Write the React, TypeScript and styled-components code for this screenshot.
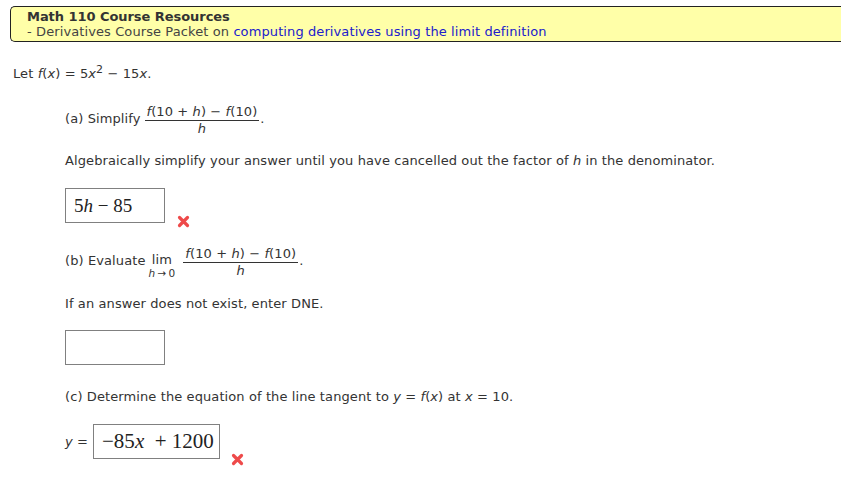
import React from "react";
import styled, { createGlobalStyle } from "styled-components";

const Global = createGlobalStyle`
  html, body { margin: 0; padding: 0; background: #fff; }
  body {
    font-family: "DejaVu Sans", Verdana, sans-serif;
    font-size: 13px;
    letter-spacing: 0.1px;
    color: #333;
  }
`;

const Page = styled.div`
  width: 841px;
  height: 482px;
  overflow: hidden;
  padding-top: 6px;
  box-sizing: border-box;
`;

const Header = styled.div`
  margin-left: 10px;
  border: 1px solid #222;
  border-right: none;
  border-radius: 5px 0 0 5px;
  background: #ffffa8;
  padding: 2px 16px 2px 16px;
  line-height: 15px;
`;

const HeaderTitle = styled.div`
  font-weight: bold;
  letter-spacing: -0.05px;
  color: #333;
`;

const HeaderLine = styled.div`
  color: #444;
`;

const Link = styled.a`
  color: #2020cc;
  text-decoration: none;
`;

const Intro = styled.div`
  margin: 24px 0 0 13px;
  line-height: 16px;
`;

const Part = styled.div<{ $top: number }>`
  margin: ${(p) => p.$top}px 0 0 65px;
  line-height: 16px;
`;

const I = styled.i`
  font-style: italic;
`;

const Sup = styled.sup`
  font-size: 11px;
  line-height: 0;
  vertical-align: 5px;
`;

const Frac = styled.span`
  display: inline-flex;
  flex-direction: column;
  align-items: stretch;
  vertical-align: middle;
  text-align: center;
  line-height: 15px;
  margin: 0 1px 0 4px;
  position: relative;
  top: 1px;
`;

const Num = styled.span`
  border-bottom: 1px solid #333;
  padding: 0 2px 1px;
`;

const Den = styled.span`
  padding-top: 0;
`;

const Lim = styled.span`
  display: inline-flex;
  flex-direction: column;
  align-items: center;
  vertical-align: middle;
  margin: 0 4px 0 3px;
  position: relative;
  top: 5px;
`;

const LimWord = styled.span`
  line-height: 14px;
`;

const LimSub = styled.span`
  font-size: 10.5px;
  line-height: 13px;
`;

const AnswerRow = styled.div<{ $top: number }>`
  display: flex;
  align-items: flex-end;
  margin: ${(p) => p.$top}px 0 0 65px;
`;

const Box = styled.div<{ $w: number; $size: number }>`
  width: ${(p) => p.$w}px;
  height: 35px;
  box-sizing: border-box;
  border: 1px solid #808080;
  display: flex;
  align-items: center;
  padding-left: 8px;
  font-family: "Liberation Serif", "DejaVu Serif", serif;
  font-size: ${(p) => p.$size}px;
  letter-spacing: 0;
  color: #222;
  white-space: pre;
`;

const MathI = styled.i`
  font-style: italic;
`;

const Label = styled.span`
  align-self: center;
  margin-right: 5px;
`;

const Cross = styled.svg<{ $gap: number; $drop: number }>`
  margin-left: ${(p) => p.$gap}px;
  margin-bottom: -${(p) => p.$drop}px;
  flex: none;
`;

function XMark({ gap, drop }: { gap: number; drop: number }) {
  return (
    <Cross $gap={gap} $drop={drop} width="13" height="13" viewBox="0 0 13 13">
      <path
        d="M2.5 2.5 L10.5 10.5 M10.5 2.5 L2.5 10.5"
        stroke="#ee4a4a"
        strokeWidth="3.2"
        strokeLinecap="round"
      />
    </Cross>
  );
}

function Fraction() {
  return (
    <Frac>
      <Num>
        <I>f</I>(10 + <I>h</I>) − <I>f</I>(10)
      </Num>
      <Den>
        <I>h</I>
      </Den>
    </Frac>
  );
}

export default function App() {
  return (
    <Page>
      <Global />
      <Header>
        <HeaderTitle>Math 110 Course Resources</HeaderTitle>
        <HeaderLine>
          - Derivatives Course Packet on{" "}
          <Link href="#">computing derivatives using the limit definition</Link>
        </HeaderLine>
      </Header>

      <Intro>
        Let <I>f</I>(<I>x</I>) = 5<I>x</I>
        <Sup>2</Sup> − 15<I>x</I>.
      </Intro>

      <Part $top={21}>
        (a) Simplify
        <Fraction />.
      </Part>

      <Part $top={18}>
        Algebraically simplify your answer until you have cancelled out the factor of <I>h</I> in the
        denominator.
      </Part>

      <AnswerRow $top={19}>
        <Box $w={100} $size={19}>
          5<MathI>h</MathI> − 85
        </Box>
        <XMark gap={12} drop={5} />
      </AnswerRow>

      <Part $top={22}>
        (b) Evaluate
        <Lim>
          <LimWord>lim</LimWord>
          <LimSub>
            <I>h</I>{"\u2009→\u2009"}0
          </LimSub>
        </Lim>
        <Fraction />.
      </Part>

      <Part $top={19}>If an answer does not exist, enter DNE.</Part>

      <AnswerRow $top={18}>
        <Box $w={100} $size={19} />
      </AnswerRow>

      <Part $top={24}>
        (c) Determine the equation of the line tangent to <I>y</I> = <I>f</I>(<I>x</I>) at <I>x</I> ={" "}
        10.
      </Part>

      <AnswerRow $top={19}>
        <Label>
          <I>y</I> =
        </Label>
        <Box $w={127} $size={21}>
          −85<MathI>x</MathI>  + 1200
        </Box>
        <XMark gap={11} drop={7} />
      </AnswerRow>
    </Page>
  );
}
